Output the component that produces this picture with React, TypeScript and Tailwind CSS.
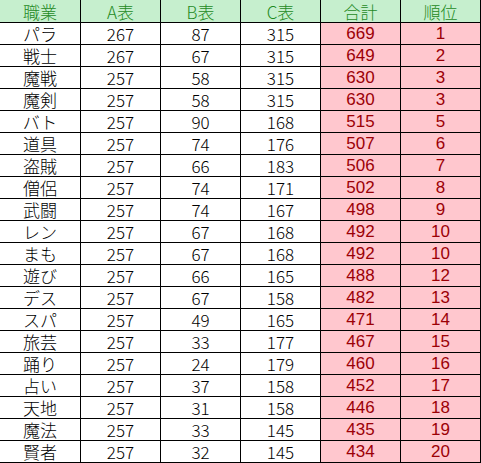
const rows: [string, number, number, number, number, number][] = [
  ["パラ", 267, 87, 315, 669, 1],
  ["戦士", 267, 67, 315, 649, 2],
  ["魔戦", 257, 58, 315, 630, 3],
  ["魔剣", 257, 58, 315, 630, 3],
  ["バト", 257, 90, 168, 515, 5],
  ["道具", 257, 74, 176, 507, 6],
  ["盗賊", 257, 66, 183, 506, 7],
  ["僧侶", 257, 74, 171, 502, 8],
  ["武闘", 257, 74, 167, 498, 9],
  ["レン", 257, 67, 168, 492, 10],
  ["まも", 257, 67, 168, 492, 10],
  ["遊び", 257, 66, 165, 488, 12],
  ["デス", 257, 67, 158, 482, 13],
  ["スパ", 257, 49, 165, 471, 14],
  ["旅芸", 257, 33, 177, 467, 15],
  ["踊り", 257, 24, 179, 460, 16],
  ["占い", 257, 37, 158, 452, 17],
  ["天地", 257, 31, 158, 446, 18],
  ["魔法", 257, 33, 145, 435, 19],
  ["賢者", 257, 32, 145, 434, 20],
];

const headers = ["職業", "A表", "B表", "C表", "合計", "順位"];

// grid lines only on the right and bottom, like a cropped spreadsheet
const cell = "flex items-center justify-center border-r border-b border-black h-[22px] leading-[18px] text-[17px]";

export default function App() {
  return (
    <div
      className="w-[481px] h-[463px] bg-white overflow-hidden"
      style={{ fontFamily: '"Noto Sans CJK JP", "Noto Sans", sans-serif' }}
    >
      <div className="grid grid-cols-[81px_80px_80px_80px_80px_80px]">
        {headers.map((h) => (
          <div key={h} className={`${cell} h-[23px] pt-px bg-[#c6efce] text-[#1e8a1e] font-light`}>
            {h}
          </div>
        ))}
        {rows.map((r) => (
          <div key={r[0]} className="contents">
            <div className={`${cell} font-light text-black`}>{r[0]}</div>
            <div className={`${cell} font-light text-black`}>{r[1]}</div>
            <div className={`${cell} font-light text-black`}>{r[2]}</div>
            <div className={`${cell} font-light text-black`}>{r[3]}</div>
            <div
              className={`${cell} bg-[#ffc7ce] text-[#9c0006]`}
              style={{ fontFamily: '"Liberation Sans", Arial, sans-serif' }}
            >
              {r[4]}
            </div>
            <div
              className={`${cell} bg-[#ffc7ce] text-[#9c0006]`}
              style={{ fontFamily: '"Liberation Sans", Arial, sans-serif' }}
            >
              {r[5]}
            </div>
          </div>
        ))}
      </div>
    </div>
  );
}
